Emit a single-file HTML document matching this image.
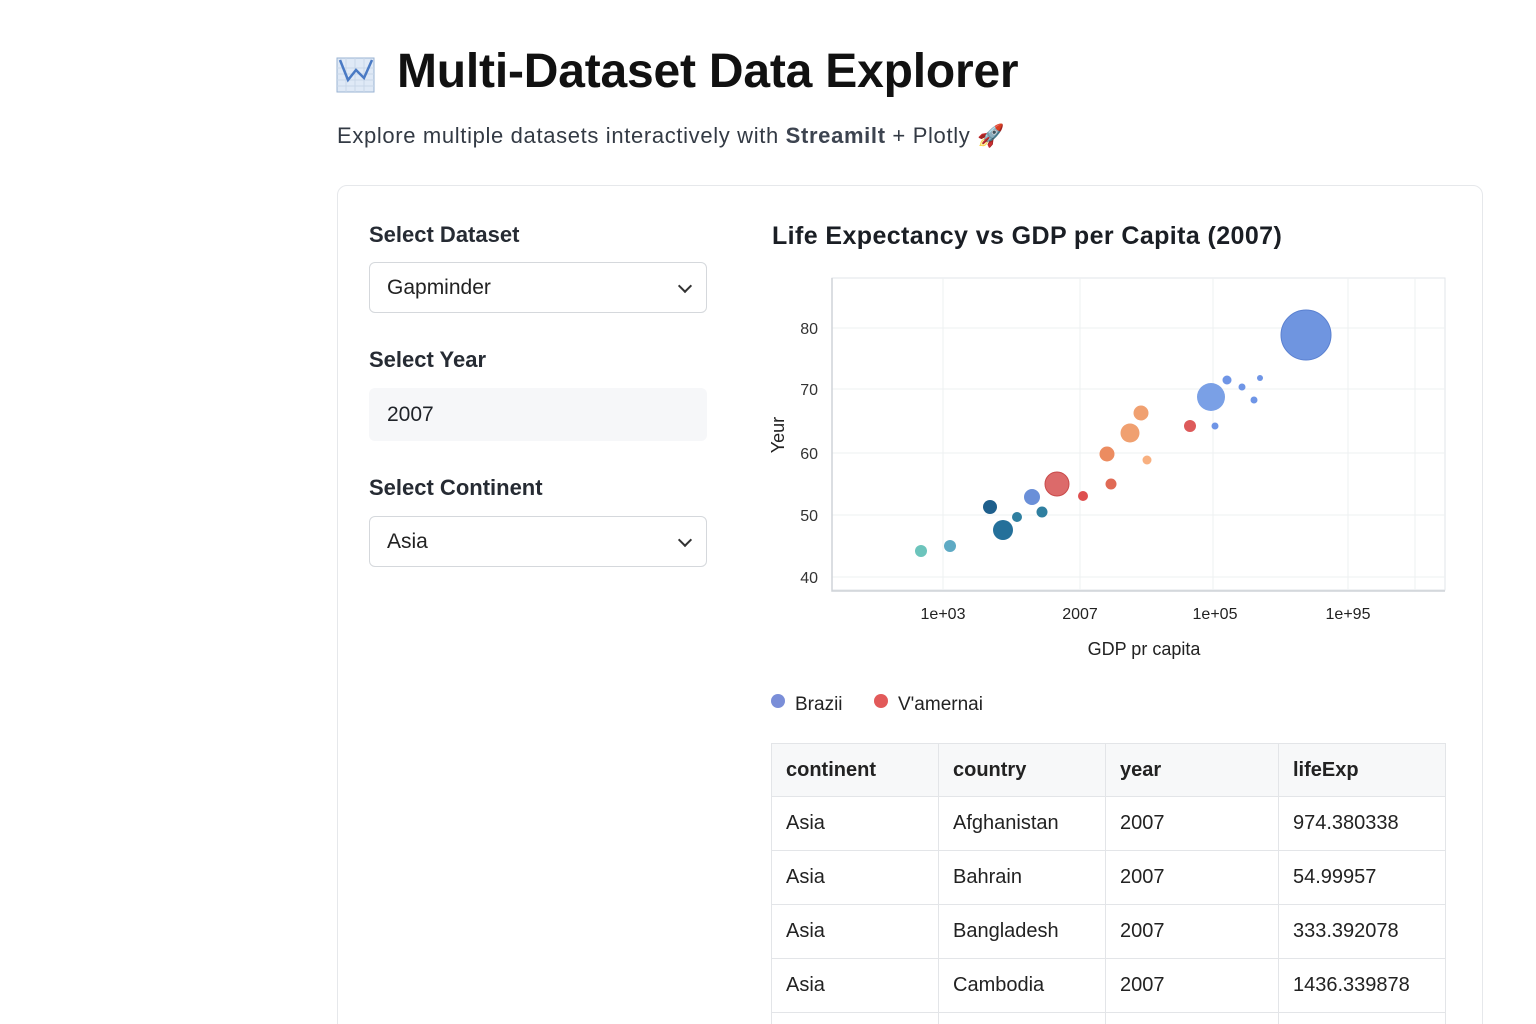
<!DOCTYPE html>
<html style="width:1536px;height:1024px;overflow:hidden"><head><meta charset="utf-8"><style>
*{box-sizing:border-box;margin:0;padding:0}
html,body{width:1536px;height:1024px;overflow:hidden;background:#fff}
body{font-family:"Liberation Sans","DejaVu Sans",sans-serif;color:#1f2329}
#wrap{position:relative;width:1536px;height:1024px;overflow:hidden}
.abs{position:absolute}
h1{position:absolute;left:397px;top:44px;font-size:48px;font-weight:700;color:#111;letter-spacing:-0.2px}
.sub{left:337px;top:123px;font-size:22px;color:#333a44;letter-spacing:0.65px}
.card{left:337px;top:185px;width:1146px;height:850px;border:1px solid #e6e8eb;border-radius:10px}
.lbl{font-size:22px;font-weight:700;color:#262b33}
.sel{left:369px;width:338px;height:51px;border:1px solid #d5d8dc;border-radius:6px;font-size:21px;padding:13px 17px;color:#222}
.chev{position:absolute;right:16px;top:18px;width:10px;height:10px;border-right:2px solid #333;border-bottom:2px solid #333;transform:rotate(45deg)}
table{position:absolute;left:771px;top:743px;width:675px;border-collapse:collapse;font-size:20px;color:#222}
td,th{border:1px solid #e3e5e8;height:54px;padding:0 14px;text-align:left}
th{background:#f7f8f9;font-weight:700;height:53px}
</style></head><body><div id="wrap">
<svg class="abs" style="left:336px;top:56px" width="40" height="38" viewBox="0 0 40 38"><rect x="1" y="2" width="37" height="34" fill="#dfe9f6" stroke="#9ab3d3"/><path d="M1 30h37M1 24h37M1 18h37M1 12h37M10 2v34M19 2v34M28 2v34" stroke="#c8d6e8"/><path d="M4 4 L12 24 L20 14 L28 22 L36 4" stroke="#4a7ac4" stroke-width="2.5" fill="none"/></svg>
<h1>Multi-Dataset Data Explorer</h1>
<div class="abs sub">Explore multiple datasets interactively with <b style="color:#3d4450">Streamilt</b> + Plotly 🚀</div>
<div class="abs card"></div>
<div class="abs lbl" style="left:369px;top:222px">Select Dataset</div>
<div class="abs sel" style="top:262px">Gapminder<div class="chev"></div></div>
<div class="abs lbl" style="left:369px;top:347px">Select Year</div>
<div class="abs" style="left:369px;top:388px;width:338px;height:53px;background:#f6f7f9;border-radius:6px;font-size:21px;padding:15px 18px">2007</div>
<div class="abs lbl" style="left:369px;top:475px">Select Continent</div>
<div class="abs sel" style="top:516px">Asia<div class="chev"></div></div>
<div class="abs" style="left:772px;top:222px;font-size:25px;font-weight:700;color:#1a1e24;letter-spacing:0.4px">Life Expectancy vs GDP per Capita (2007)</div>
<svg class="abs" style="left:760px;top:270px" width="700" height="450">
<rect x="72" y="8" width="613" height="312" fill="#fff" stroke="#e2e5e9"/>
<g stroke="#eef0f2"><path d="M183 8v312M320 8v312M453 8v312M588 8v312M655 8v312M72 58h613M72 119h613M72 183h613M72 245h613M72 307h613"/></g>
<path d="M72 8v313h613" stroke="#cfd3d8" fill="none" stroke-width="1.5"/>
<g font-size="16" fill="#333" text-anchor="end"><text x="58" y="64">80</text><text x="58" y="125">70</text><text x="58" y="189">60</text><text x="58" y="251">50</text><text x="58" y="313">40</text></g>
<g font-size="16" fill="#222" text-anchor="middle"><text x="183" y="349">1e+03</text><text x="320" y="349">2007</text><text x="455" y="349">1e+05</text><text x="588" y="349">1e+95</text><text x="384" y="385" font-size="18">GDP pr capita</text></g>
<text transform="translate(24 165) rotate(-90)" font-size="18" fill="#222" text-anchor="middle">Yeur</text>
<g>
<circle cx="546" cy="65" r="25" fill="#6f95e0" stroke="#5a80d0"/>
<circle cx="451" cy="127" r="14" fill="#7aa0e6"/>
<circle cx="467" cy="110" r="4.5" fill="#6f95e6"/><circle cx="482" cy="117" r="3.5" fill="#6f95e6"/><circle cx="500" cy="108" r="3" fill="#6f95e6"/><circle cx="494" cy="130" r="3.5" fill="#6f95e6"/><circle cx="455" cy="156" r="3.5" fill="#6f95e6"/>
<circle cx="430" cy="156" r="6" fill="#dd5a5a"/>
<circle cx="381" cy="143" r="7.5" fill="#f0a070"/><circle cx="370" cy="163" r="9.5" fill="#f0a070"/><circle cx="347" cy="184" r="7.5" fill="#ec8c60"/><circle cx="387" cy="190" r="4.5" fill="#f8b080"/>
<circle cx="351" cy="214" r="5.5" fill="#e06a55"/><circle cx="323" cy="226" r="5" fill="#de4f4f"/>
<circle cx="297" cy="214" r="12" fill="#dc6a6a" stroke="#c94a4a"/>
<circle cx="272" cy="227" r="8" fill="#6a8fd8"/>
<circle cx="230" cy="237" r="7" fill="#1e5f8c"/><circle cx="282" cy="242" r="5.5" fill="#2f7fa0"/><circle cx="257" cy="247" r="5" fill="#2f7fa0"/>
<circle cx="243" cy="260" r="10" fill="#24709a"/>
<circle cx="190" cy="276" r="6" fill="#5eaac4"/><circle cx="161" cy="281" r="6" fill="#6cc4bc"/>
</g>
<circle cx="18" cy="431" r="7" fill="#7a8ed8"/><text x="35" y="440" font-size="19" fill="#222">Brazii</text>
<circle cx="121" cy="431" r="7" fill="#e25a5a"/><text x="138" y="440" font-size="19" fill="#222">V'amernai</text>
</svg>
<table>
<tr><th style="width:167px">continent</th><th style="width:167px">country</th><th style="width:173px">year</th><th>lifeExp</th></tr>
<tr><td>Asia</td><td>Afghanistan</td><td>2007</td><td>974.380338</td></tr>
<tr><td>Asia</td><td>Bahrain</td><td>2007</td><td>54.99957</td></tr>
<tr><td>Asia</td><td>Bangladesh</td><td>2007</td><td>333.392078</td></tr>
<tr><td>Asia</td><td>Cambodia</td><td>2007</td><td>1436.339878</td></tr>
<tr><td style="height:20px"></td><td style="height:20px"></td><td style="height:20px"></td><td style="height:20px"></td></tr>
</table>
</div></body></html>
